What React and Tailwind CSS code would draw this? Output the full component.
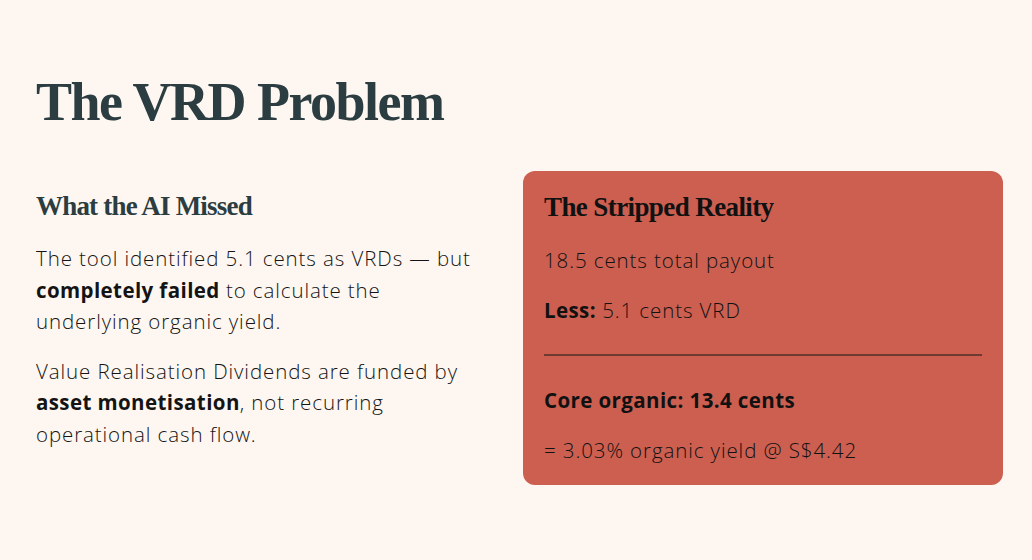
import React from 'react';

const serif = { fontFamily: '"Liberation Serif", "DejaVu Serif", serif' };

const App = () => {
  return (
    <div
      className="min-h-[560px] w-full bg-[#fef7f1] px-[36px] pt-[70px] text-[#141414]"
      style={{ fontFamily: '"Open Sans", "Noto Sans", sans-serif' }}
    >
      <h1 className="text-[54px] font-bold leading-[64px] tracking-[-1.5px] text-[#2b3d41]" style={serif}>
        The VRD Problem
      </h1>

      <div className="mt-[37px] flex items-start justify-between">
        <div className="w-[442px] pt-[18px]">
          <h2 className="text-[27px] font-bold leading-[34px] tracking-[-0.8px] text-[#2b3d41]" style={serif}>
            What the AI Missed
          </h2>
          <p className="mt-[20px] text-[20.5px] font-light leading-[31.5px] tracking-[0.9px]">
            The tool identified 5.1 cents as VRDs — but{' '}
            <strong className="font-bold tracking-[0.4px]">completely failed</strong> to calculate the
            underlying organic yield.
          </p>
          <p className="mt-[18px] text-[20.5px] font-light leading-[31.5px] tracking-[0.9px]">
            Value Realisation Dividends are funded by{' '}
            <strong className="font-bold tracking-[0.4px]">asset monetisation</strong>, not recurring
            operational cash flow.
          </p>
        </div>

        <div className="mr-[-7px] w-[480px] rounded-[12px] bg-[#cc5f50] px-[21px] pb-[19px] pt-[19px] text-[#111]">
          <h3 className="text-[27px] font-bold leading-[34px] tracking-[-0.6px] text-[#111]" style={serif}>
            The Stripped Reality
          </h3>
          <p className="mt-[21px] text-[20.5px] font-light leading-[31.5px] tracking-[0.9px]">
            18.5 cents total payout
          </p>
          <p className="mt-[18px] text-[20.5px] font-light leading-[31.5px] tracking-[0.9px]">
            <strong className="font-bold tracking-[0.4px]">Less:</strong> 5.1 cents VRD
          </p>
          <div className="mt-[28px] h-[2px] bg-[#6e3a31]" />
          <p className="mt-[29px] text-[20.5px] font-bold leading-[31.5px] tracking-[0.4px]">
            Core organic: 13.4 cents
          </p>
          <p className="mt-[18px] text-[20.5px] font-light leading-[31.5px] tracking-[0.9px]">
            = 3.03% organic yield @ S$4.42
          </p>
        </div>
      </div>
    </div>
  );
};

export default App;
